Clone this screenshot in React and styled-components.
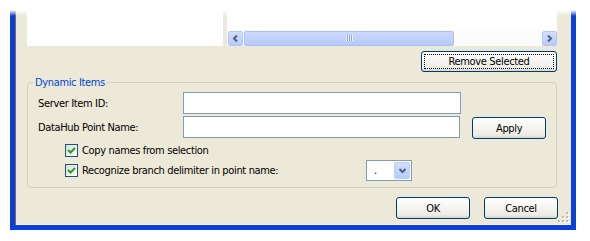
import React from "react";
import styled, { createGlobalStyle } from "styled-components";

const UI_FONT = `"DejaVu Sans Condensed", "Liberation Sans", Arial, sans-serif`;

const GlobalStyle = createGlobalStyle`
  html, body {
    margin: 0;
    padding: 0;
    background: #ffffff;
  }
  body {
    font-family: ${UI_FONT};
    font-size: 11px;
    letter-spacing: -0.35px;
    color: #000;
  }
`;

const Window = styled.div`
  position: relative;
  box-sizing: content-box;
  margin-left: 10px;
  width: 530px;
  padding: 0 14px 6px 12px;
  background: #ece9d8;
  border: 5px solid #0a3ee0;
  border-top: none;
  border-left-color: #0b3ddb;
  border-right-color: #0840d8;
  box-shadow: inset 1px 0 0 #6e6c60, inset 0 -1px 0 #f8f7f2;

  &::before {
    content: "";
    position: absolute;
    top: 0;
    left: -5px;
    right: -5px;
    height: 16px;
    background: linear-gradient(#fff 0, #fff 10px, rgba(255, 255, 255, 0) 16px);
    pointer-events: none;
  }
`;

const TopRow = styled.div`
  display: flex;
  gap: 4px;
  height: 46px;
`;

const ListBox = styled.div`
  width: 196px;
  background: #fff;
`;

const ListView = styled.div`
  flex: 1;
  display: flex;
  flex-direction: column;
  background: #fff;
`;

const ListArea = styled.div`
  flex: 1;
`;

const HScroll = styled.div`
  height: 16px;
  display: flex;
  align-items: center;
  gap: 1px;
  padding-left: 1px;
  background: #fcfcfa;
`;

const ScrollButton = styled.div`
  box-sizing: border-box;
  width: 15px;
  height: 15px;
  border: 1px solid #b5c8f5;
  border-radius: 2px;
  background: linear-gradient(#d2defd, #b8cbf9);
  display: flex;
  align-items: center;
  justify-content: center;
`;

const Thumb = styled.div`
  box-sizing: border-box;
  width: 210px;
  height: 15px;
  border: 1px solid #a9bff5;
  border-radius: 2px;
  background: linear-gradient(#cad9fd, #b7caf8);
  display: flex;
  align-items: center;
  justify-content: center;
`;

const Track = styled.div`
  flex: 1;
  height: 15px;
`;

const ActionRow = styled.div`
  display: flex;
  justify-content: flex-end;
  margin-top: 5px;
`;

const Button = styled.button`
  box-sizing: border-box;
  width: ${(p) => p.$w}px;
  height: ${(p) => p.$h || 22}px;
  margin: ${(p) => p.$m || 0};
  padding: 0;
  font-family: ${UI_FONT};
  font-size: 11px;
  letter-spacing: -0.35px;
  color: #000;
  border: 1px solid #003c74;
  border-radius: 3px;
  background: linear-gradient(#ffffff 0%, #f6f5f1 45%, #ecebe5 85%, #d8d3c8 100%);
  outline: ${(p) => (p.$focused ? "1px dotted #000" : "none")};
  outline-offset: -4px;
`;

const GroupBox = styled.fieldset`
  margin: 4px 0 0 0;
  padding: 3px 10px 6px 10px;
  border: 1px solid #d0d0bf;
  border-radius: 4px;
  min-width: 0;

  legend {
    margin-left: -5px;
    padding: 0 2px;
    line-height: 13px;
    color: #0046d5;
  }
`;

const FieldRow = styled.div`
  display: flex;
  align-items: center;
  height: 22px;
  margin-top: ${(p) => p.$mt || 0}px;
`;

const Label = styled.span`
  width: 145px;
`;

const TextBox = styled.div`
  box-sizing: border-box;
  width: 278px;
  height: 22px;
  border: 1px solid #7f9db9;
  background: #fff;
`;

const CheckRow = styled.div`
  display: flex;
  align-items: center;
  height: ${(p) => p.$h}px;
  margin-top: ${(p) => p.$mt}px;
  padding-left: 27px;
`;

const CheckBox = styled.span`
  box-sizing: border-box;
  width: 13px;
  height: 13px;
  border: 1px solid #1c5180;
  background: linear-gradient(135deg, #dcdcd7, #ffffff);
  display: flex;
  align-items: center;
  justify-content: center;
  flex: none;
`;

const CheckText = styled.span`
  margin-left: 4px;
  width: ${(p) => p.$w || "auto"};
  white-space: nowrap;
`;

const Combo = styled.div`
  box-sizing: border-box;
  width: 46px;
  height: 21px;
  border: 1px solid #7f9db9;
  background: #fff;
  display: flex;
  align-items: center;
  justify-content: space-between;
  padding: 1px;
`;

const ComboValue = styled.span`
  padding-left: 6px;
`;

const DropButton = styled.div`
  box-sizing: border-box;
  width: 16px;
  height: 17px;
  border: 1px solid #bccdf7;
  border-radius: 2px;
  background: linear-gradient(#d3dffd, #b7cbf9);
  display: flex;
  align-items: center;
  justify-content: center;
`;

const Footer = styled.div`
  display: flex;
  justify-content: flex-end;
  gap: 14px;
  margin-top: 9px;
  margin-right: -1px;
`;

const SizeGrip = styled.svg`
  position: absolute;
  right: 2px;
  bottom: 2px;
`;

const Chevron = ({ dir }) => {
  const pts = {
    left: "8,3.5 5,6.5 8,9.5",
    right: "5,3.5 8,6.5 5,9.5",
    down: "3.5,5 6.5,8 9.5,5",
  }[dir];
  return (
    <svg width="13" height="13" viewBox="0 0 13 13">
      <polyline points={pts} fill="none" stroke="#4d6185" strokeWidth="2" />
    </svg>
  );
};

const Check = () => (
  <svg width="11" height="11" viewBox="0 0 11 11">
    <polyline points="2,5 4.5,7.5 9,3" fill="none" stroke="#21a121" strokeWidth="2" />
  </svg>
);

const GripLines = () => (
  <svg width="7" height="6" viewBox="0 0 7 6">
    {[0, 2, 4, 6].map((x) => (
      <line key={x} x1={x + 0.5} y1="0" x2={x + 0.5} y2="6" stroke="#eef3fe" strokeWidth="1" />
    ))}
    {[1, 3, 5].map((x) => (
      <line key={x} x1={x + 0.5} y1="0" x2={x + 0.5} y2="6" stroke="#8ca5e3" strokeWidth="1" />
    ))}
  </svg>
);

const dots = [
  [8, 0],
  [4, 4],
  [8, 4],
  [0, 8],
  [4, 8],
  [8, 8],
];

export default function App() {
  return (
    <>
      <GlobalStyle />
      <Window>
        <TopRow>
          <ListBox />
          <ListView>
            <ListArea />
            <HScroll>
              <ScrollButton>
                <Chevron dir="left" />
              </ScrollButton>
              <Thumb>
                <GripLines />
              </Thumb>
              <Track />
              <ScrollButton>
                <Chevron dir="right" />
              </ScrollButton>
            </HScroll>
          </ListView>
        </TopRow>

        <ActionRow>
          <Button $w={136} $h={21} $focused>
            Remove Selected
          </Button>
        </ActionRow>

        <GroupBox>
          <legend>Dynamic Items</legend>
          <FieldRow>
            <Label>Server Item ID:</Label>
            <TextBox />
          </FieldRow>
          <FieldRow $mt={2}>
            <Label>DataHub Point Name:</Label>
            <TextBox />
            <Button $w={74} $m="2px 0 0 12px">
              Apply
            </Button>
          </FieldRow>
          <CheckRow $h={13} $mt={6}>
            <CheckBox>
              <Check />
            </CheckBox>
            <CheckText>Copy names from selection</CheckText>
          </CheckRow>
          <CheckRow $h={21} $mt={3}>
            <CheckBox>
              <Check />
            </CheckBox>
            <CheckText $w="284px">Recognize branch delimiter in point name:</CheckText>
            <Combo>
              <ComboValue>.</ComboValue>
              <DropButton>
                <Chevron dir="down" />
              </DropButton>
            </Combo>
          </CheckRow>
        </GroupBox>

        <Footer>
          <Button $w={74}>OK</Button>
          <Button $w={74}>Cancel</Button>
        </Footer>

        <SizeGrip width="11" height="11" viewBox="0 0 11 11">
          {dots.map(([x, y], i) => (
            <g key={i}>
              <rect x={x + 1} y={y + 1} width="2" height="2" fill="#fff" />
              <rect x={x} y={y} width="2" height="2" fill="#c1bead" />
            </g>
          ))}
        </SizeGrip>
      </Window>
    </>
  );
}
